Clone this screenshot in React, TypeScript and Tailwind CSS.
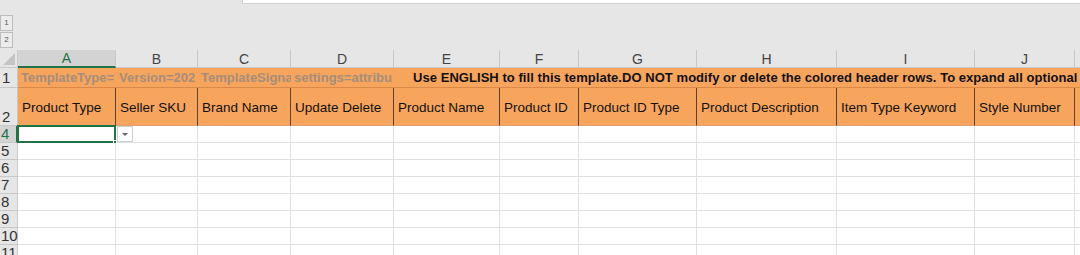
import React from "react";

const cols = [
  { l: "A", w: 98, h: "Product Type", r1: "TemplateType=" },
  { l: "B", w: 82, h: "Seller SKU", r1: "Version=202" },
  { l: "C", w: 93, h: "Brand Name", r1: "TemplateSigna" },
  { l: "D", w: 103, h: "Update Delete", r1: "settings=attribu" },
  { l: "E", w: 106, h: "Product Name" },
  { l: "F", w: 79, h: "Product ID" },
  { l: "G", w: 118, h: "Product ID Type" },
  { l: "H", w: 140, h: "Product Description" },
  { l: "I", w: 138, h: "Item Type Keyword" },
  { l: "J", w: 100, h: "Style Number" },
  { l: "K", w: 100, h: "" },
];

const font = { fontFamily: '"Liberation Sans", Arial, sans-serif' };

export default function App() {
  const rows = [4, 5, 6, 7, 8, 9, 10, 11];
  return (
    <div className="w-[1080px] h-[255px] overflow-hidden bg-[#e6e6e6]" style={font}>
      {/* top area */}
      <div className="h-[50px] flex flex-col">
        <div className="ml-[242px] h-[4px] bg-white border-b border-l border-[#d0d0d0]" />
        <div className="mt-[11px] w-[13px] flex flex-col gap-[1px]">
          <div className="h-[16px] border border-[#bdbdbd] bg-[#ececec] text-[8px] text-[#555] flex items-center justify-center">1</div>
          <div className="h-[16px] border border-[#bdbdbd] bg-[#ececec] text-[8px] text-[#555] flex items-center justify-center">2</div>
        </div>
      </div>
      {/* column headers */}
      <div className="flex h-[18px]">
        <div className="w-[18px] shrink-0 border-r border-b border-[#c8c8c8] relative overflow-hidden">
          <div className="absolute right-[2px] bottom-[2px] w-0 h-0 border-l-[12px] border-l-transparent border-b-[12px] border-b-[#c4c4c4]" />
        </div>
        {cols.map((c, i) => (
          <div
            key={c.l}
            className={
              i === 0
                ? "shrink-0 bg-[#d3d3d3] border-r border-[#c8c8c8] border-b-2 border-b-[#217346] text-[#217346] text-[14px] leading-[16px] flex items-center justify-center"
                : "shrink-0 border-r border-b border-[#c8c8c8] text-[#444] text-[14px] leading-[16px] flex items-center justify-center"
            }
            style={{ width: c.w }}
          >
            {c.l === "K" ? "" : c.l}
          </div>
        ))}
      </div>
      {/* row 1 */}
      <div className="flex h-[20px]">
        <div className="w-[18px] shrink-0 border-r border-b border-[#c8c8c8] text-[15px] text-[#333] leading-[19px] pl-[2px]">1</div>
        <div className="flex-1 flex bg-[#f7a55d] border-b border-[#d98a48]">
          {cols.slice(0, 4).map((c) => (
            <div
              key={c.l}
              className="shrink-0 overflow-hidden whitespace-nowrap text-[13px] font-bold text-[#a58e7c] leading-[19px] pl-[3px]"
              style={{ width: c.w }}
            >
              {c.r1}
            </div>
          ))}
          <div className="flex-1 overflow-hidden whitespace-nowrap text-[13px] font-bold text-[#111] leading-[19px] pl-[19px] tracking-[0.05px]">
            Use ENGLISH to fill this template.DO NOT modify or delete the colored header rows. To expand all optional
          </div>
        </div>
      </div>
      {/* row 2 */}
      <div className="flex h-[38px]">
        <div className="w-[18px] shrink-0 border-r border-b border-[#c8c8c8] text-[15px] text-[#333] leading-[16px] pl-[2px] flex items-end">2</div>
        {cols.map((c) => (
          <div
            key={c.l}
            className="shrink-0 bg-[#f7a55d] border-r border-[#5a4030] border-b border-b-[#e0a070] overflow-hidden whitespace-nowrap text-[13.5px] text-[#111] pl-[4px] pt-[3px] flex items-center"
            style={{ width: c.w }}
          >
            {c.h}
          </div>
        ))}
      </div>
      {/* data rows */}
      {rows.map((r) => (
        <div key={r} className="flex h-[17px]">
          <div
            className={
              r === 4
                ? "w-[18px] shrink-0 bg-[#d3d3d3] border-r-2 border-r-[#217346] border-b border-[#c8c8c8] text-[15px] text-[#217346] leading-[16px] pl-[1px]"
                : "w-[18px] shrink-0 border-r border-b border-[#c8c8c8] text-[15px] text-[#333] leading-[16px] pl-[1px]"
            }
          >
            {r}
          </div>
          {cols.map((c, i) => (
            <div
              key={c.l}
              className="shrink-0 bg-white border-r border-b border-[#e0e0e0] relative"
              style={{ width: c.w }}
            >
              {r === 4 && i === 0 && (
                <div className="absolute -left-[1px] -top-[1px] right-[-1px] bottom-[-1px] border-2 border-[#217346]">
                  <div className="absolute -right-[4px] -bottom-[4px] w-[5px] h-[5px] bg-[#217346] border border-white" />
                </div>
              )}
              {r === 4 && i === 1 && (
                <div className="absolute left-[1px] top-0 w-[16px] h-[16px] bg-white border border-[#d0d0d0] flex items-center justify-center">
                  <div className="w-0 h-0 border-l-[3px] border-r-[3px] border-t-[3px] border-l-transparent border-r-transparent border-t-[#666]" />
                </div>
              )}
            </div>
          ))}
        </div>
      ))}
    </div>
  );
}
